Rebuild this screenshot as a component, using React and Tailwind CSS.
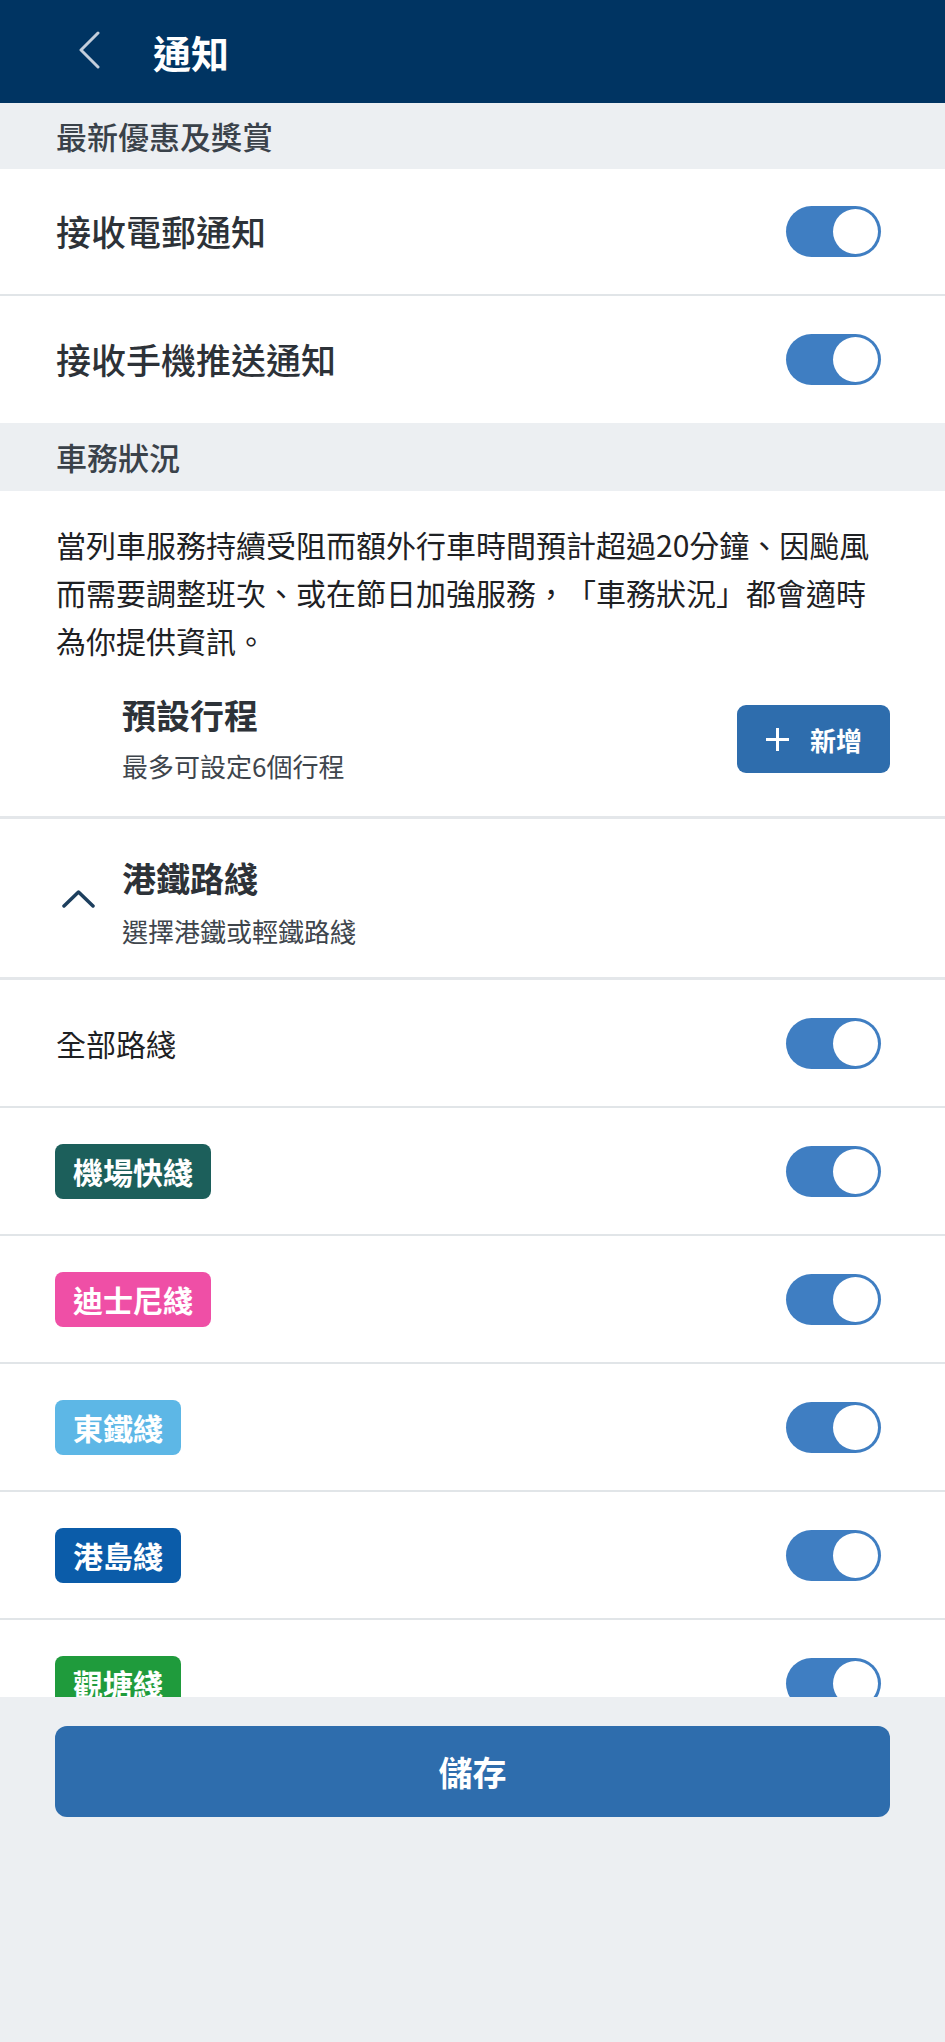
const font = { fontFamily: '"Noto Sans CJK TC", "Noto Sans", sans-serif' };

const lines = [
  { name: '機場快綫', color: 'bg-[#1c5f5b]' },
  { name: '迪士尼綫', color: 'bg-[#ef4fa6]' },
  { name: '東鐵綫', color: 'bg-[#5db7e6]' },
  { name: '港島綫', color: 'bg-[#0b5ca9]' },
  { name: '觀塘綫', color: 'bg-[#1f9b3c]' },
];

const Toggle = () => (
  <div className="w-[95px] h-[51px] rounded-full bg-[#3f7ec2] p-[3px] flex justify-end shrink-0">
    <div className="w-[45px] h-[45px] rounded-full bg-white" />
  </div>
);

const App = () => {
  return (
    <div className="w-[945px] h-[2042px] flex flex-col bg-[#eceff2] overflow-hidden" style={font}>
      <div className="h-[103px] shrink-0 bg-[#003462] flex items-center">
        <svg className="ml-[78px] mt-[-4px]" width="23" height="38" viewBox="0 0 23 38" fill="none">
          <polyline points="20,2 3,19 20,36" stroke="#c3cedb" strokeWidth="3" strokeLinecap="round" strokeLinejoin="round" />
        </svg>
        <h1 className="ml-[52px] text-[38px] font-bold text-white leading-none">通知</h1>
      </div>

      <div className="flex-1 overflow-hidden bg-white">
        <div className="h-[66px] bg-[#eceff2] flex items-center pl-[56px] text-[31px] font-medium text-[#3a424a]">
          最新優惠及獎賞
        </div>
        <div className="h-[127px] flex items-center justify-between pl-[56px] pr-[64px] border-b-2 border-[#e1e5e8]">
          <span className="text-[35px] font-medium text-[#2d3238]">接收電郵通知</span>
          <Toggle />
        </div>
        <div className="h-[127px] flex items-center justify-between pl-[56px] pr-[64px]">
          <span className="text-[35px] font-medium text-[#2d3238]">接收手機推送通知</span>
          <Toggle />
        </div>
        <div className="h-[68px] bg-[#eceff2] flex items-center pl-[56px] text-[31px] font-medium text-[#3a424a]">
          車務狀況
        </div>

        <p className="pt-[29px] px-[56px] text-[30px] leading-[48px] text-[#1e2124] [text-spacing-trim:space-all]">
          當列車服務持續受阻而額外行車時間預計超過20分鐘、因颱風而需要調整班次、或在節日加強服務，「車務狀況」都會適時為你提供資訊。
        </p>

        <div className="h-[155px] flex items-center justify-between pl-[122px] pr-[55px] border-b-[3px] border-[#e4e7ea]">
          <div className="mt-[-4px]">
            <div className="text-[34px] font-bold leading-[44px] text-[#2d3238]">預設行程</div>
            <div className="mt-[12px] text-[26px] leading-[34px] text-[#3e454c]">最多可設定6個行程</div>
          </div>
          <button className="h-[68px] mt-[-2px] rounded-[9px] bg-[#2e6dad] flex items-center gap-[20px] px-[28px] text-white">
            <svg width="25" height="25" viewBox="0 0 25 25">
              <line x1="12.5" y1="1" x2="12.5" y2="24" stroke="white" strokeWidth="3" />
              <line x1="1" y1="12.5" x2="24" y2="12.5" stroke="white" strokeWidth="3" />
            </svg>
            <span className="text-[26px] font-bold">新增</span>
          </button>
        </div>

        <div className="h-[161px] flex items-center border-b-[3px] border-[#e4e7ea]">
          <svg className="ml-[62px] mt-[2px]" width="33" height="19" viewBox="0 0 33 19" fill="none">
            <polyline points="2,16 16.5,2 31,16" stroke="#1d3f5e" strokeWidth="3.5" strokeLinecap="round" strokeLinejoin="round" />
          </svg>
          <div className="ml-[27px] mt-[8px]">
            <div className="text-[34px] font-bold leading-[44px] text-[#2d3238]">港鐵路綫</div>
            <div className="mt-[14px] text-[26px] leading-[34px] text-[#3e454c]">選擇港鐵或輕鐵路綫</div>
          </div>
        </div>

        <div className="h-[128px] flex items-center justify-between pl-[56px] pr-[64px] border-b-2 border-[#e1e5e8]">
          <span className="text-[30px] text-[#1e2124]">全部路綫</span>
          <Toggle />
        </div>

        {lines.map((line) => (
          <div
            key={line.name}
            className="h-[128px] flex items-center justify-between pl-[55px] pr-[64px] border-b-2 border-[#e1e5e8]"
          >
            <span className={`${line.color} h-[55px] rounded-[8px] px-[18px] flex items-center text-[30px] font-bold text-white leading-none`}>
              {line.name}
            </span>
            <Toggle />
          </div>
        ))}
      </div>

      <div className="h-[345px] shrink-0 bg-[#eceff2] pt-[29px] px-[55px]">
        <button className="w-full h-[91px] rounded-[12px] bg-[#2e6dad] text-white text-[34px] font-bold">
          儲存
        </button>
      </div>
    </div>
  );
};

export default App;
